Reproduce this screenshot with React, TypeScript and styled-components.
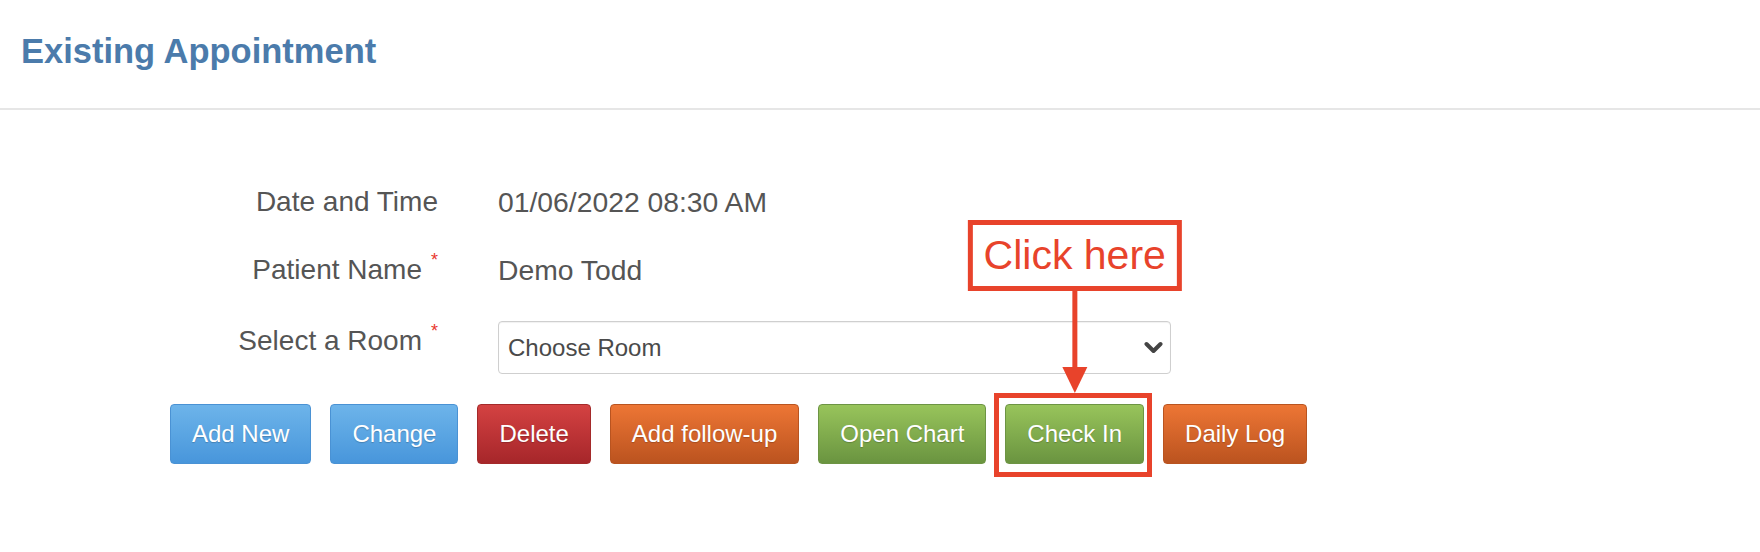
import React from "react";
import styled, { createGlobalStyle, css } from "styled-components";

const GlobalStyle = createGlobalStyle`
  html, body { margin: 0; padding: 0; background: #fff; }
  body { font-family: "Liberation Sans", Arial, Helvetica, sans-serif; color: #555; }
  * { box-sizing: border-box; }
`;

const Page = styled.div`
  width: 1760px;
  height: 552px;
  background: #fff;
  overflow: hidden;
`;

const Header = styled.header`
  padding: 31px 21px 37px;
  border-bottom: 2px solid #e6e6e6;
`;

const Title = styled.h1`
  margin: 0;
  font-size: 34.5px;
  line-height: 40px;
  font-weight: 700;
  color: #4b7bab;
`;

const Body = styled.main`
  padding: 75px 0 0 170px;
`;

const Form = styled.div`
  display: grid;
  grid-template-columns: 268px 673px;
  column-gap: 60px;
  row-gap: 34px;
  align-items: start;
`;

const Label = styled.div<{ $offset?: number }>`
  display: flex;
  justify-content: flex-end;
  align-items: flex-start;
  font-size: 28px;
  line-height: 34px;
  color: #555;
  padding-top: ${(p) => p.$offset ?? 0}px;
`;

const Star = styled.span`
  margin-left: 9px;
  margin-top: -2px;
  font-size: 18px;
  line-height: 18px;
  color: #e8372e;
`;

const Value = styled.div`
  font-size: 28.3px;
  line-height: 34px;
  color: #555;
`;

const SelectWrap = styled.div`
  position: relative;
  width: 673px;
  height: 53px;
`;

const Select = styled.select`
  appearance: none;
  -webkit-appearance: none;
  width: 100%;
  height: 100%;
  border: 1px solid #cfcfcf;
  border-radius: 4px;
  background: #fff;
  box-shadow: inset 0 1px 1px rgba(0, 0, 0, 0.06);
  padding: 0 40px 0 9px;
  font-family: "Liberation Sans", Arial, Helvetica, sans-serif;
  font-size: 24px;
  color: #4a4a4a;
  outline: none;
`;

const Chevron = styled.svg`
  position: absolute;
  right: 8px;
  top: 50%;
  transform: translateY(-50%);
  pointer-events: none;
`;

const Buttons = styled.div`
  display: flex;
  gap: 19px;
  margin-top: 30px;
`;

type Tone = "blue" | "red" | "orange" | "green";

const tones: Record<Tone, { top: string; bottom: string; border: string }> = {
  blue: { top: "#6db4ea", bottom: "#4896db", border: "#4a92d4" },
  red: { top: "#d44242", bottom: "#a6262a", border: "#a42a2a" },
  orange: { top: "#ed7635", bottom: "#bb531f", border: "#b95420" },
  green: { top: "#98c45b", bottom: "#6a9440", border: "#6d9444" },
};

const Button = styled.button<{ $tone: Tone }>`
  height: 60px;
  padding: 0 21px;
  font-family: "Liberation Sans", Arial, Helvetica, sans-serif;
  font-size: 24px;
  color: #fff;
  border-radius: 4px;
  cursor: pointer;
  white-space: nowrap;
  text-shadow: 0 1px 1px rgba(0, 0, 0, 0.2);
  ${(p) => css`
    background: linear-gradient(to bottom, ${tones[p.$tone].top}, ${tones[p.$tone].bottom});
    border: 1px solid ${tones[p.$tone].border};
  `}
`;

const Target = styled.div`
  position: relative;
  display: flex;
`;

const Highlight = styled.div`
  position: absolute;
  top: -11px;
  left: -11px;
  right: -8px;
  bottom: -13px;
  border: 5px solid #e8432b;
  pointer-events: none;
`;

const Annotation = styled.div`
  position: absolute;
  bottom: calc(100% + 11px);
  left: 50%;
  transform: translateX(-50%);
  display: flex;
  flex-direction: column;
  align-items: center;
  z-index: 2;
  pointer-events: none;
`;

const Callout = styled.div`
  border: 5px solid #e8432b;
  background: #fff;
  padding: 0 11px;
  height: 71px;
  font-size: 41px;
  line-height: 61px;
  color: #e8432b;
  white-space: nowrap;
`;

export default function App() {
  return (
    <Page>
      <GlobalStyle />
      <Header>
        <Title>Existing Appointment</Title>
      </Header>
      <Body>
        <Form>
          <Label>Date and Time</Label>
          <Value>01/06/2022 08:30 AM</Value>

          <Label>
            Patient Name<Star>*</Star>
          </Label>
          <Value>Demo Todd</Value>

          <Label $offset={3}>
            Select a Room<Star>*</Star>
          </Label>
          <SelectWrap>
            <Select defaultValue="">
              <option value="">Choose Room</option>
            </Select>
            <Chevron width="19" height="13" viewBox="0 0 19 13">
              <polyline
                points="2.5,2.5 9.5,9.5 16.5,2.5"
                fill="none"
                stroke="#444"
                strokeWidth="4"
                strokeLinecap="round"
                strokeLinejoin="round"
              />
            </Chevron>
          </SelectWrap>
        </Form>

        <Buttons>
          <Button $tone="blue">Add New</Button>
          <Button $tone="blue">Change</Button>
          <Button $tone="red">Delete</Button>
          <Button $tone="orange">Add follow-up</Button>
          <Button $tone="green">Open Chart</Button>
          <Target>
            <Button $tone="green">Check In</Button>
            <Highlight />
            <Annotation>
              <Callout>Click here</Callout>
              <svg width="26" height="102" viewBox="0 0 26 102">
                <line x1="13" y1="0" x2="13" y2="78" stroke="#e8432b" strokeWidth="5" />
                <polygon points="0.5,76 25.5,76 13,102" fill="#e8432b" />
              </svg>
            </Annotation>
          </Target>
          <Button $tone="orange">Daily Log</Button>
        </Buttons>
      </Body>
    </Page>
  );
}
